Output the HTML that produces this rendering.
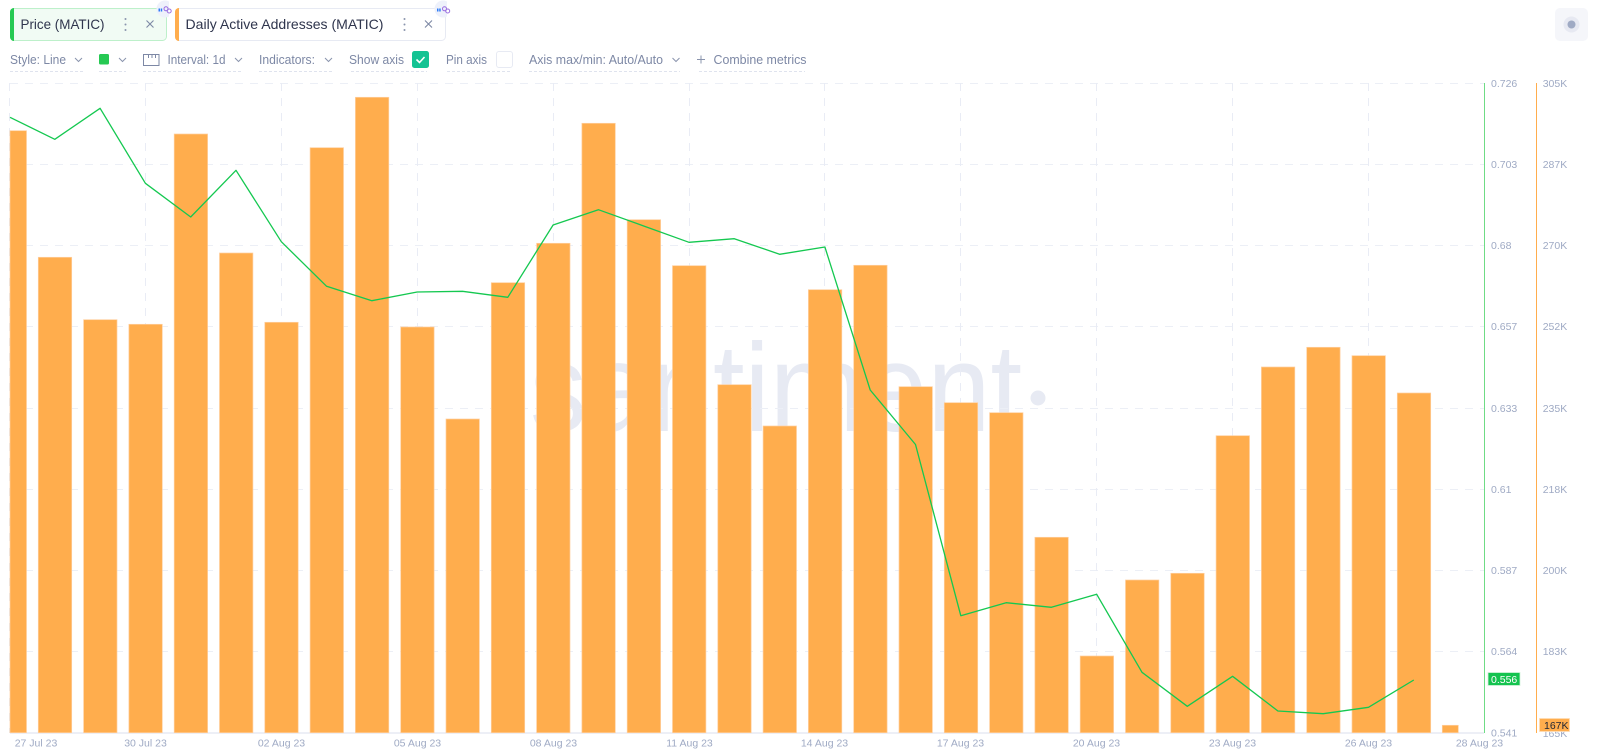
<!DOCTYPE html>
<html><head><meta charset="utf-8"><title>Chart</title>
<style>
html,body{margin:0;padding:0;background:#fff;width:1600px;height:755px;overflow:hidden}
svg{display:block;font-family:"Liberation Sans",sans-serif}
.t{font-size:13px;fill:#7d88a5}
.a{font-size:10.5px;fill:#9faac4}
.g{stroke:#eceff6;stroke-width:1;stroke-dasharray:8 7;fill:none}
.v{stroke:#e9ecf5;stroke-width:1;stroke-dasharray:8 7;fill:none}
.u{stroke:#dfe3ee;stroke-width:1;stroke-dasharray:3 2;fill:none}
.c{stroke:#8a94ad;stroke-width:1;fill:none}
.b rect{fill:#ffad4d;stroke:#ffcf9f;stroke-width:.7}
</style></head><body>
<svg width="1600" height="755" viewBox="0 0 1600 755" xmlns="http://www.w3.org/2000/svg">
<!-- watermark -->
<text x="530" y="431" font-size="125" fill="#e7eaf3" textLength="492" lengthAdjust="spacingAndGlyphs">santiment</text>
<circle cx="1038" cy="398" r="7.5" fill="#e7eaf3"/>
<!-- grid -->
<path class="g" d="M10 83.500H1484M10 164.500H1484M10 245.500H1484M10 326.500H1484M10 408.500H1484M10 489.500H1484M10 570.500H1484M10 651.500H1484"/>
<path class="v" d="M9.500 83V733M145.500 83V733M281.500 83V733M417.500 83V733M553.500 83V733M689.500 83V733M824.500 83V733M960.500 83V733M1096.500 83V733M1232.500 83V733M1368.500 83V733"/>
<path d="M10 733H1484" stroke="#e7eaf3" stroke-width="1.4"/>
<!-- bars -->
<g class="b">
<rect x="10" y="130.7" width="16.5" height="602"/>
<rect x="38.3" y="257.3" width="33.4" height="475.4"/>
<rect x="83.6" y="319.7" width="33.4" height="413"/>
<rect x="128.9" y="324.3" width="33.4" height="408.4"/>
<rect x="174.2" y="134" width="33.4" height="598.7"/>
<rect x="219.5" y="253" width="33.4" height="479.7"/>
<rect x="264.8" y="322.3" width="33.4" height="410.4"/>
<rect x="310.1" y="147.7" width="33.4" height="585"/>
<rect x="355.4" y="97.3" width="33.4" height="635.4"/>
<rect x="400.7" y="327" width="33.4" height="405.7"/>
<rect x="446" y="419" width="33.4" height="313.7"/>
<rect x="491.3" y="282.7" width="33.4" height="450"/>
<rect x="536.6" y="243.3" width="33.4" height="489.4"/>
<rect x="581.9" y="123.3" width="33.4" height="609.4"/>
<rect x="627.2" y="219.7" width="33.4" height="513"/>
<rect x="672.5" y="265.7" width="33.4" height="467"/>
<rect x="717.8" y="384.7" width="33.4" height="348"/>
<rect x="763.1" y="426" width="33.4" height="306.7"/>
<rect x="808.4" y="289.7" width="33.4" height="443"/>
<rect x="853.7" y="265.3" width="33.4" height="467.4"/>
<rect x="899" y="386.7" width="33.4" height="346"/>
<rect x="944.3" y="402.7" width="33.4" height="330"/>
<rect x="989.6" y="412.7" width="33.4" height="320"/>
<rect x="1034.9" y="537.3" width="33.4" height="195.4"/>
<rect x="1080.2" y="656" width="33.4" height="76.7"/>
<rect x="1125.5" y="580" width="33.4" height="152.7"/>
<rect x="1170.8" y="573.3" width="33.4" height="159.4"/>
<rect x="1216.1" y="435.7" width="33.4" height="297"/>
<rect x="1261.4" y="367" width="33.4" height="365.7"/>
<rect x="1306.7" y="347.3" width="33.4" height="385.4"/>
<rect x="1352" y="355.7" width="33.4" height="377"/>
<rect x="1397.3" y="393" width="33.4" height="339.7"/>
<rect x="1442.3" y="725.3" width="16" height="7.4"/>
</g>
<!-- price line -->
<polyline fill="none" stroke="#14c850" stroke-width="1.3" stroke-linejoin="round" points="10,117.3 54.8,139.3 100.1,108.3 145.4,183.3 190.7,217 236,170.3 281.3,241.7 326.6,286.3 371.9,300.7 417.2,292 462.5,291.3 507.8,297.3 553.1,225 598.4,209.7 643.7,226 689,242.3 734.3,238.7 779.6,254.3 824.9,247 870.2,390 915.5,444.5 960.8,615.7 1006.1,602.7 1051.4,607.3 1096.7,594.3 1142,672.3 1187.3,706.3 1232.6,676.3 1277.9,711 1323.2,713.7 1368.5,707.3 1413.8,680"/>
<!-- axes -->
<path d="M1484.500 83V733" stroke="#6fdc85" stroke-width="1"/>
<path d="M1536.500 83V733" stroke="#ffad4d" stroke-width="1"/>
<g class="a">
<text x="1491" y="87">0.726</text><text x="1491" y="168">0.703</text><text x="1491" y="249">0.68</text><text x="1491" y="330">0.657</text><text x="1491" y="412">0.633</text><text x="1491" y="493">0.61</text><text x="1491" y="574">0.587</text><text x="1491" y="655">0.564</text><text x="1491" y="736.500">0.541</text>
<text x="1542.700" y="87">305K</text><text x="1542.700" y="168">287K</text><text x="1542.700" y="249">270K</text><text x="1542.700" y="330">252K</text><text x="1542.700" y="412">235K</text><text x="1542.700" y="493">218K</text><text x="1542.700" y="574">200K</text><text x="1542.700" y="655">183K</text><text x="1542.700" y="737">165K</text>
</g>
<g class="a" text-anchor="middle">
<text x="36" y="746.700">27 Jul 23</text><text x="145.500" y="746.700">30 Jul 23</text><text x="281.500" y="746.700">02 Aug 23</text><text x="417.500" y="746.700">05 Aug 23</text><text x="553.500" y="746.700">08 Aug 23</text><text x="689.500" y="746.700">11 Aug 23</text><text x="824.500" y="746.700">14 Aug 23</text><text x="960.500" y="746.700">17 Aug 23</text><text x="1096.500" y="746.700">20 Aug 23</text><text x="1232.500" y="746.700">23 Aug 23</text><text x="1368.500" y="746.700">26 Aug 23</text><text x="1479.500" y="746.700">28 Aug 23</text>
</g>
<!-- value badges -->
<rect x="1488" y="672.500" width="32" height="13" fill="#14c34f" stroke="#d5f3dd" stroke-width=".8"/>
<text x="1491" y="683" font-size="10.5" fill="#fff">0.556</text>
<rect x="1539.500" y="718.500" width="30" height="13" fill="#ffad4d" stroke="#ffdcb4" stroke-width=".8"/>
<text x="1544" y="729" font-size="10.500" fill="#1f2433">167K</text>
<!-- tab 1 -->
<rect x="10.500" y="8.500" width="156" height="32" rx="4" fill="#f1fbf4" stroke="#bdf0ca"/>
<path d="M14 8V41A4 4 0 0 1 10 37V12A4 4 0 0 1 14 8Z" fill="#26c953"/>
<text x="20.500" y="29" font-size="14" fill="#2f354d" textLength="84" lengthAdjust="spacingAndGlyphs">Price (MATIC)</text>
<g fill="#8a94ad"><circle cx="125.500" cy="19" r="1"/><circle cx="125.500" cy="24.500" r="1"/><circle cx="125.500" cy="30" r="1"/></g>
<path d="M146.500 20.500L153.500 27.500M153.500 20.500L146.500 27.500" stroke="#7d88a5" stroke-width="1.100" fill="none"/>
<!-- tab 2 -->
<rect x="175.500" y="8.500" width="270" height="32" rx="4" fill="#fff" stroke="#e7eaf3"/>
<path d="M179 8V41A4 4 0 0 1 175 37V12A4 4 0 0 1 179 8Z" fill="#ffad4d"/>
<text x="185.500" y="29" font-size="14" fill="#2f354d" textLength="198" lengthAdjust="spacingAndGlyphs">Daily Active Addresses (MATIC)</text>
<g fill="#8a94ad"><circle cx="404.500" cy="19" r="1"/><circle cx="404.500" cy="24.500" r="1"/><circle cx="404.500" cy="30" r="1"/></g>
<path d="M425 20.500L432 27.500M432 20.500L425 27.500" stroke="#7d88a5" stroke-width="1.100" fill="none"/>
<!-- link badges -->
<g>
<circle cx="165" cy="9" r="8.500" fill="#eef1fb"/>
<rect x="169" y="0" width="5.500" height="20" fill="#fff"/>
<rect x="158.500" y="8.500" width="1.500" height="3" fill="#2f7cf6"/><rect x="160.700" y="8.500" width="1.500" height="3" fill="#2f7cf6"/>
<g fill="none" stroke="#9b6ee0" stroke-width="1"><circle cx="166" cy="8.800" r="2"/><circle cx="169.200" cy="11" r="2"/></g>
</g>
<g>
<circle cx="443" cy="9" r="8.500" fill="#eef1fb"/>
<rect x="447" y="0" width="9" height="20" fill="#fff"/>
<rect x="437" y="8.500" width="1.500" height="3" fill="#2f7cf6"/><rect x="439.200" y="8.500" width="1.500" height="3" fill="#2f7cf6"/>
<g fill="none" stroke="#9b6ee0" stroke-width="1"><circle cx="444.500" cy="8.800" r="2"/><circle cx="447.700" cy="11" r="2"/></g>
</g>
<!-- toolbar -->
<g class="t">
<text x="10" y="64" textLength="56" lengthAdjust="spacingAndGlyphs">Style: Line</text>
<text x="167.500" y="64" textLength="58" lengthAdjust="spacingAndGlyphs">Interval: 1d</text>
<text x="259" y="64" textLength="56" lengthAdjust="spacingAndGlyphs">Indicators:</text>
<text x="349" y="64" textLength="55" lengthAdjust="spacingAndGlyphs">Show axis</text>
<text x="446" y="64" textLength="41" lengthAdjust="spacingAndGlyphs">Pin axis</text>
<text x="529" y="64" textLength="134" lengthAdjust="spacingAndGlyphs">Axis max/min: Auto/Auto</text>
<text x="713.500" y="64" textLength="93" lengthAdjust="spacingAndGlyphs">Combine metrics</text>
</g>
<g class="c">
<path d="M75 58L78.500 61.500L82 58"/><path d="M119 58L122.500 61.500L126 58"/><path d="M235 58L238.500 61.500L242 58"/><path d="M325 58L328.500 61.500L332 58"/><path d="M672.500 58L676 61.500L679.500 58"/>
<path d="M143.500 65.500V54.500H159V65.500ZM148.500 54.500V58M152 54.500V58M155.500 54.500V58" stroke="#7d88a5"/>
<path d="M697 59.500H705M701 55.500V63.500"/>
</g>
<rect x="99" y="54" width="10" height="10.500" rx="1.500" fill="#26c953"/>
<rect x="412" y="51" width="17" height="17" rx="2.500" fill="#14c393"/>
<path d="M416.500 59.500L419.500 62.500L424.500 57" fill="none" stroke="#fff" stroke-width="1.600"/>
<rect x="496.500" y="51.500" width="16" height="16" rx="2.500" fill="#fff" stroke="#e7eaf3"/>
<path class="u" d="M10 71.500H83M99 71.500H126M143 71.500H243M259 71.500H332M351 71.500H427M447 71.500H510M529 71.500H680M699 71.500H805"/>
<!-- right button -->
<rect x="1555" y="8" width="33" height="33" rx="5" fill="#f5f6fa"/>
<circle cx="1571.500" cy="24.500" r="8" fill="#e7e9f2"/>
<circle cx="1571.500" cy="24.500" r="4" fill="#9faac4"/>
</svg>
</body></html>
